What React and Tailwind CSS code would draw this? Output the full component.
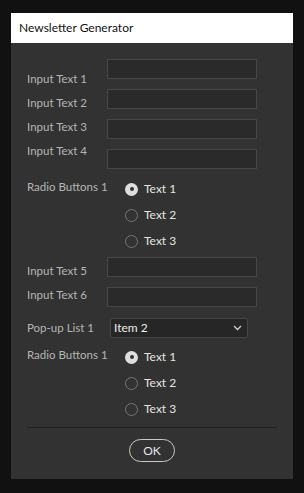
import React from "react";

const font = { fontFamily: 'Lato, "Noto Sans", sans-serif' };

function Input() {
  return <div className="h-[20px] w-[150px] bg-[#2a2a2a] border border-[#474747]" />;
}

function Radio({ checked, label }) {
  return (
    <div className="h-[26px] flex items-center">
      {checked ? (
        <div className="w-[13px] h-[13px] rounded-full bg-[#dedede] flex items-center justify-center">
          <div className="w-[4px] h-[4px] rounded-full bg-[#333]" />
        </div>
      ) : (
        <div className="w-[13px] h-[13px] rounded-full border border-[#767676]" />
      )}
      <span className="ml-[6px] text-[12px] text-[#e4e4e4]">{label}</span>
    </div>
  );
}

function RadioGroup() {
  return (
    <div className="flex">
      <div className="w-[98px] h-[26px] leading-[26px] text-[11.5px] text-[#b5b5b5] -mt-[2px]">Radio Buttons 1</div>
      <div className="flex flex-col">
        <Radio checked label="Text 1" />
        <Radio label="Text 2" />
        <Radio label="Text 3" />
      </div>
    </div>
  );
}

export default function App() {
  return (
    <div className="w-[304px] h-[493px] bg-[#111111] pt-[13px] pl-[11px]" style={font}>
      <div className="w-[282px]">
        <div className="h-[30px] bg-white flex items-center pl-[8px] text-[12px] text-[#111]">
          Newsletter Generator
        </div>
        <div className="bg-[#323232] px-[16px] pt-[16px] pb-[17px]">
          <div className="flex">
            <div className="w-[80px] pt-[8px] flex flex-col text-[11.5px] text-[#b5b5b5]">
              <div className="h-[24px] leading-[24px]">Input Text 1</div>
              <div className="h-[24px] leading-[24px]">Input Text 2</div>
              <div className="h-[24px] leading-[24px]">Input Text 3</div>
              <div className="h-[24px] leading-[24px]">Input Text 4</div>
            </div>
            <div className="flex flex-col gap-[10px]">
              <Input />
              <Input />
              <Input />
              <Input />
            </div>
          </div>
          <div className="mt-[7px]">
            <RadioGroup />
          </div>
          <div className="flex mt-[3px]">
            <div className="w-[80px] pt-[2px] flex flex-col text-[11.5px] text-[#b5b5b5]">
              <div className="h-[24px] leading-[24px]">Input Text 5</div>
              <div className="h-[24px] leading-[24px]">Input Text 6</div>
            </div>
            <div className="flex flex-col gap-[10px]">
              <Input />
              <Input />
            </div>
          </div>
          <div className="flex mt-[11px] items-center">
            <div className="w-[83px] text-[11.5px] text-[#b5b5b5] leading-[20px]">Pop-up List 1</div>
            <div className="w-[138px] h-[20px] bg-[#262626] border border-[#474747] rounded-[2px] flex items-center justify-between pl-[3px] pr-[5px]">
              <span className="text-[12px] text-[#ececec]">Item 2</span>
              <svg width="9" height="6" viewBox="0 0 9 6" fill="none">
                <path d="M1 1 L4.5 4.5 L8 1" stroke="#cfcfcf" strokeWidth="1.3" />
              </svg>
            </div>
          </div>
          <div className="mt-[6px]">
            <RadioGroup />
          </div>
          <div className="mt-[5px] h-px bg-[#202020]" />
          <div className="mt-[11px] flex justify-center">
            <div className="w-[46px] h-[23px] rounded-full border-[1.5px] border-[#c8c8c8] flex items-center justify-center text-[12px] text-[#e8e8e8]">
              OK
            </div>
          </div>
        </div>
      </div>
    </div>
  );
}
